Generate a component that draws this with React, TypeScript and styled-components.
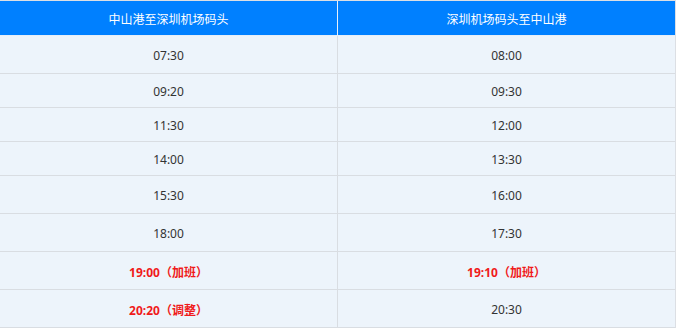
import React from 'react';
import styled, {createGlobalStyle} from 'styled-components';

const GlobalStyle = createGlobalStyle`
    html, body {
        margin: 0;
        padding: 0;
        background: #ffffff;
    }
    body {
        font-family: "Noto Sans", "Noto Sans CJK SC", sans-serif;
    }
`

type Row = { left: string, right: string, leftRed?: boolean, rightRed?: boolean, h: number }

const rows: Row[] = [
    {left: '07:30', right: '08:00', h: 37},
    {left: '09:20', right: '09:30', h: 33},
    {left: '11:30', right: '12:00', h: 33},
    {left: '14:00', right: '13:30', h: 33},
    {left: '15:30', right: '16:00', h: 37},
    {left: '18:00', right: '17:30', h: 37},
    {left: '19:00（加班）', right: '19:10（加班）', leftRed: true, rightRed: true, h: 37},
    {left: '20:20（调整）', right: '20:30', leftRed: true, h: 37},
]

function App() {
    return (
        <>
            <GlobalStyle/>
            <Table>
                <HeadRow>
                    <HeadCell>中山港至深圳机场码头</HeadCell>
                    <HeadCell $last>深圳机场码头至中山港</HeadCell>
                </HeadRow>
                {rows.map((r, i) => (
                    <BodyRow key={i} $h={r.h}>
                        <Cell $red={r.leftRed}>{r.left}</Cell>
                        <Cell $red={r.rightRed} $last>{r.right}</Cell>
                    </BodyRow>
                ))}
            </Table>
        </>
    );
}

const Table = styled.div`
    width: 676px;
    border-top: 1px solid #dcdfe4;
    border-right: 1px solid #dcdfe4;
    box-sizing: border-box;
`

const HeadRow = styled.div`
    display: grid;
    grid-template-columns: 338px 1fr;
    height: 34px;
    background: #0080ff;
    border-bottom: 1px solid #e6eef8;
`

const HeadCell = styled.div<{ $last?: boolean }>`
    display: flex;
    align-items: center;
    justify-content: center;
    color: #ffffff;
    font-size: 12px;
    font-family: "Noto Sans CJK SC", sans-serif;
    border-right: ${p => p.$last ? 'none' : '1px solid #e8f0fa'};
`

const BodyRow = styled.div<{ $h: number }>`
    display: grid;
    grid-template-columns: 338px 1fr;
    height: ${p => p.$h}px;
    background: #edf4fb;
    border-bottom: 1px solid #d9dde2;
`

const Cell = styled.div<{ $red?: boolean, $last?: boolean }>`
    display: flex;
    align-items: center;
    justify-content: center;
    padding-top: 2px;
    font-size: 12px;
    font-family: "Noto Sans", "Noto Sans CJK SC", sans-serif;
    color: ${p => p.$red ? '#f01a1a' : '#333333'};
    font-weight: ${p => p.$red ? 700 : 400};
    border-right: ${p => p.$last ? 'none' : '1px solid #d9dde2'};
`

export default App;
